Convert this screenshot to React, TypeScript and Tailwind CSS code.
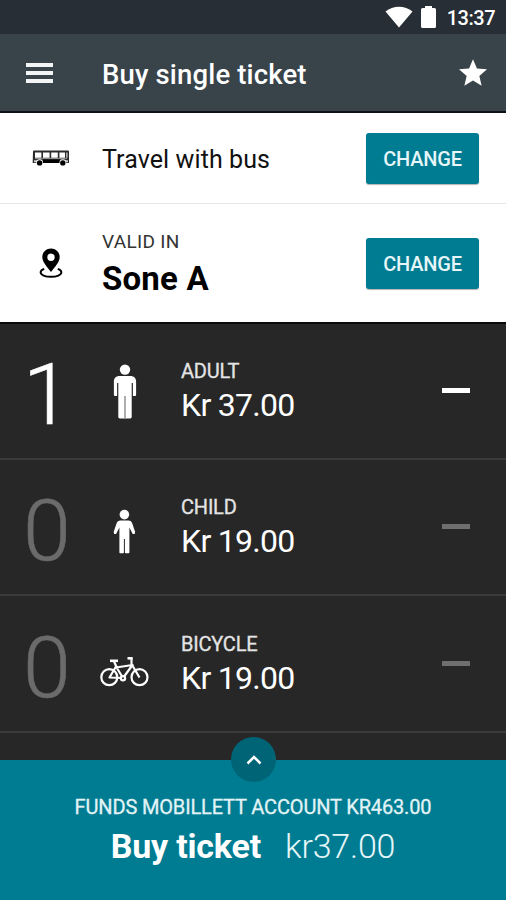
import React, { useState } from 'react';

interface Fare {
  id: string;
  name: string;
  price: string;
  count: number;
  icon: React.ReactNode;
}

const AdultIcon = () => (
  <svg width="50" height="56" viewBox="0 0 50 56" fill="#fff">
    <circle cx="25" cy="6.6" r="5.2" />
    <path d="M19.5 13h11c3.300 0 5.600 2.200 5.600 5.500V32a1 1 0 0 1-1 1h-2.200V20h-1.200v34a1.400 1.400 0 0 1-1.400 1.400h-10.600a1.400 1.400 0 0 1-1.400-1.400V20h-1.200v13h-2.200a1 1 0 0 1-1-1V18.500c0-3.300 2.300-5.500 5.600-5.500z" />
    <path d="M25 33v22.500" stroke="#999" strokeWidth="1.600" />
  </svg>
);

const ChildIcon = () => (
  <svg width="50" height="56" viewBox="0 0 50 56" fill="#fff">
    <circle cx="24.400" cy="15.600" r="4.800" />
    <path d="M20.400 21.500h8c1.900 0 3 .8 3.700 2.600l3 8.600-.4 2.200-2 .2-3.300-6.600v25a.8.8 0 0 1-.8.8h-2.900a.8.8 0 0 1-.8-.8V40h-1v13.500a.8.8 0 0 1-.8.8h-2.900a.8.8 0 0 1-.8-.8v-25l-3.300 6.600-2-.2-.4-2.200 3-8.600c.7-1.800 1.800-2.600 3.700-2.600z" />
  </svg>
);

const BicycleIcon = () => (
  <svg
    width="50"
    height="56"
    viewBox="0 0 50 56"
    fill="none"
    stroke="#fff"
    strokeWidth="2.200"
    strokeLinejoin="round"
  >
    <circle cx="9.300" cy="42.200" r="8" />
    <circle cx="39.500" cy="42.200" r="8" />
    <path d="M9.500 42.500L16 31.500L23 43zM16 32.500L32.500 30L23 43M13.800 26L17 33" />
    <path d="M10 25.800H18" strokeWidth="2.600" />
    <path d="M39.500 42.500L31.500 29V22.500" />
    <path d="M27.500 23.300H32.500" strokeWidth="2.600" />
    <circle cx="23" cy="43.300" r="3.200" fill="#fff" stroke="none" />
    <circle cx="23" cy="43.300" r="1" fill="#272727" stroke="none" />
  </svg>
);

const BusIcon = () => (
  <svg width="38" height="18" viewBox="0 0 38 18">
    <path d="M2 1.500h34a1 1 0 0 1 1 1V14H.7L1 2.500a1 1 0 0 1 1-1z" fill="#2a2a2a" />
    <path d="M3 3.400h6.400v5.400H3zM11 3.400h6.600v5.400H11zM19.200 3.400h6.600v5.400h-6.600zM27.400 3.400h5.600v5.400h-5.600zM34.400 3.400h1v5.400h-1z" fill="#fff" />
    <path d="M3 9.600h32" stroke="#999" strokeWidth="1" />
    <path d="M2 11.200h3v2H2zM33 11.200h3v2h-3z" fill="#ccc" />
    <path d="M11 10.500h17V14H11z" />
    <circle cx="7.600" cy="13.600" r="3.300" fill="#fff" />
    <circle cx="30.800" cy="13.600" r="3.300" fill="#fff" />
    <circle cx="7.600" cy="13.900" r="2.700" />
    <circle cx="30.800" cy="13.900" r="2.700" />
  </svg>
);

const PinIcon = () => (
  <svg width="24" height="32" viewBox="0 0 24 32">
    <path
      fillRule="evenodd"
      d="M12 1.500c-4.900 0-8.700 3.800-8.700 8.500 0 5 4.500 9.500 8.700 15 4.200-5.500 8.700-10 8.700-15 0-4.700-3.800-8.500-8.700-8.500zm0 5a3.700 3.700 0 1 1 0 7.400 3.700 3.700 0 0 1 0-7.400z"
    />
    <path
      d="M5.200 21.800C2.800 22.700 1.600 23.900 1.600 25.200c0 2.700 4.600 4.600 10.400 4.600s10.400-1.900 10.400-4.600c0-1.300-1.200-2.500-3.600-3.400"
      fill="none"
      stroke="#000"
      strokeWidth="1.900"
    />
  </svg>
);

const initialFares: Fare[] = [
  { id: 'adult', name: 'ADULT', price: 'Kr 37.00', count: 1, icon: <AdultIcon /> },
  { id: 'child', name: 'CHILD', price: 'Kr 19.00', count: 0, icon: <ChildIcon /> },
  { id: 'bicycle', name: 'BICYCLE', price: 'Kr 19.00', count: 0, icon: <BicycleIcon /> },
];

const ChangeButton = () => (
  <button className="h-[51px] w-[113px] rounded-[3px] bg-[#007c92] pt-px text-[20px] font-medium tracking-[-0.2px] text-[#e6f6f9] shadow-[0_1px_1px_rgba(0,0,0,0.3)]">
    CHANGE
  </button>
);

const StatusBar = () => (
  <div className="flex h-[34px] items-center justify-end bg-[#272e35] pr-[11px] text-white">
    <svg className="mr-[8px]" width="28" height="22" viewBox="0 0 28 22" fill="#fff">
      <path d="M.5 5.500C8 -.8 20 -.8 27.500 5.500L14 21.500z" />
    </svg>
    <svg className="mr-[11px]" width="15" height="22" viewBox="0 0 15 22" fill="#fff">
      <path d="M4 0h7v2h2.500a1.500 1.500 0 0 1 1.500 1.500v17a1.500 1.500 0 0 1-1.500 1.500h-12A1.500 1.500 0 0 1 0 20.500v-17A1.500 1.500 0 0 1 1.500 2H4z" />
    </svg>
    <span className="pt-[2px] text-[20px] font-medium leading-6 tracking-[-0.5px]">
      13:37
    </span>
  </div>
);

const App: React.FC = () => {
  const [fares, setFares] = useState<Fare[]>(initialFares);

  const handleDecrease = (id: string) => {
    setFares(
      fares.map((f) =>
        f.id === id ? { ...f, count: Math.max(0, f.count - 1) } : f,
      ),
    );
  };

  return (
    <div className="flex h-[900px] w-[506px] flex-col overflow-hidden bg-[#272727] font-[Roboto,sans-serif]">
      <StatusBar />
      <header className="flex h-[79px] shrink-0 items-center border-b-2 border-[#0c1216] bg-[#38434a] pl-[26px] pr-[19px] text-white">
        <button className="flex w-[28px] flex-col gap-[4px] pr-px">
          <span className="h-[4px] w-full bg-[#f2f4f5]" />
          <span className="h-[4px] w-full bg-[#f2f4f5]" />
          <span className="h-[4px] w-full bg-[#f2f4f5]" />
        </button>
        <h1 className="flex-1 pl-[48px] pt-[5px] text-[27.500px] font-medium leading-8 tracking-[0.150px]">
          Buy single ticket
        </h1>
        <svg width="28" height="27" viewBox="2 2 20 19" fill="#fff">
          <path d="M12 17.270L18.180 21l-1.640-7.030L22 9.240l-7.190-.61L12 2 9.190 8.630 2 9.240l5.460 4.730L5.820 21z" />
        </svg>
      </header>

      <section className="flex h-[91px] shrink-0 items-center border-b border-[#e6e6e8] bg-white pl-[32px] pr-[27px]">
        <BusIcon />
        <p className="flex-1 pl-[32px] pt-[3px] text-[25px] leading-8 tracking-[0.1px] text-[#111]">
          Travel with bus
        </p>
        <ChangeButton />
      </section>
      <section className="flex h-[118px] shrink-0 items-center bg-white pl-[39px] pr-[27px]">
        <PinIcon />
        <div className="flex-1 pl-[39px]">
          <p className="text-[19px] leading-[26px] tracking-[0.3px] text-[#333]">
            VALID IN
          </p>
          <p className="pt-[5px] text-[33px] font-bold leading-[38px] tracking-[0.2px] text-black">
            Sone A
          </p>
        </div>
        <ChangeButton />
      </section>

      <main className="flex-1 overflow-hidden border-t-2 border-[#0b0b0b]">
        {fares.map((fare) => (
          <div
            key={fare.id}
            className="flex h-[136.500px] items-center border-b-2 border-[#3b3b3b] pl-[23px] pr-[36px] first:h-[135.500px]"
          >
            <span
              className={
                fare.count > 0
                  ? 'w-[77px] pt-[9px] text-[86px] font-light leading-[100px] text-white [-webkit-text-stroke:0.6px]'
                  : 'w-[77px] pt-[9px] text-[86px] font-light leading-[100px] text-[#6b6b6b] [-webkit-text-stroke:0.6px]'
              }
            >
              {fare.count}
            </span>
            {fare.icon}
            <div className="flex-1 pl-[31px] pt-[5px]">
              <p className="text-[20px] leading-6 tracking-[-0.2px] text-[#e4e4e4] [-webkit-text-stroke:0.3px]">
                {fare.name}
              </p>
              <p className="text-[32px] leading-[44px] tracking-[-0.7px] text-white">
                {fare.price}
              </p>
            </div>
            <button
              className={
                fare.count > 0
                  ? 'h-[5px] w-[28px] bg-white'
                  : 'h-[5px] w-[28px] bg-[#6f6f6f]'
              }
              onClick={() => handleDecrease(fare.id)}
            />
          </div>
        ))}
      </main>

      <footer className="relative flex h-[140px] shrink-0 flex-col items-center bg-[#007c92] pt-[33px] text-white">
        <button className="absolute left-[231px] top-[-23px] flex h-[45px] w-[45px] items-center justify-center rounded-full bg-[#006477]">
          <svg width="16" height="10" viewBox="0 0 16 10" fill="none" stroke="#fff" strokeWidth="2.500">
            <path d="M1.500 8.500L8 2l6.500 6.500" />
          </svg>
        </button>
        <p className="text-[20px] leading-[28px] tracking-[-0.150px] text-[#e2f3f6] [-webkit-text-stroke:0.3px]">
          FUNDS MOBILLETT ACCOUNT KR463.00
        </p>
        <p className="flex items-baseline gap-[24px] pt-px leading-[48px]">
          <span className="text-[34px] font-bold tracking-[-0.2px]">Buy ticket</span>
          <span className="text-[34px] font-light tracking-[-0.2px] text-[#e6f6f9]">kr37.00</span>
        </p>
      </footer>
    </div>
  );
};

export default App;
